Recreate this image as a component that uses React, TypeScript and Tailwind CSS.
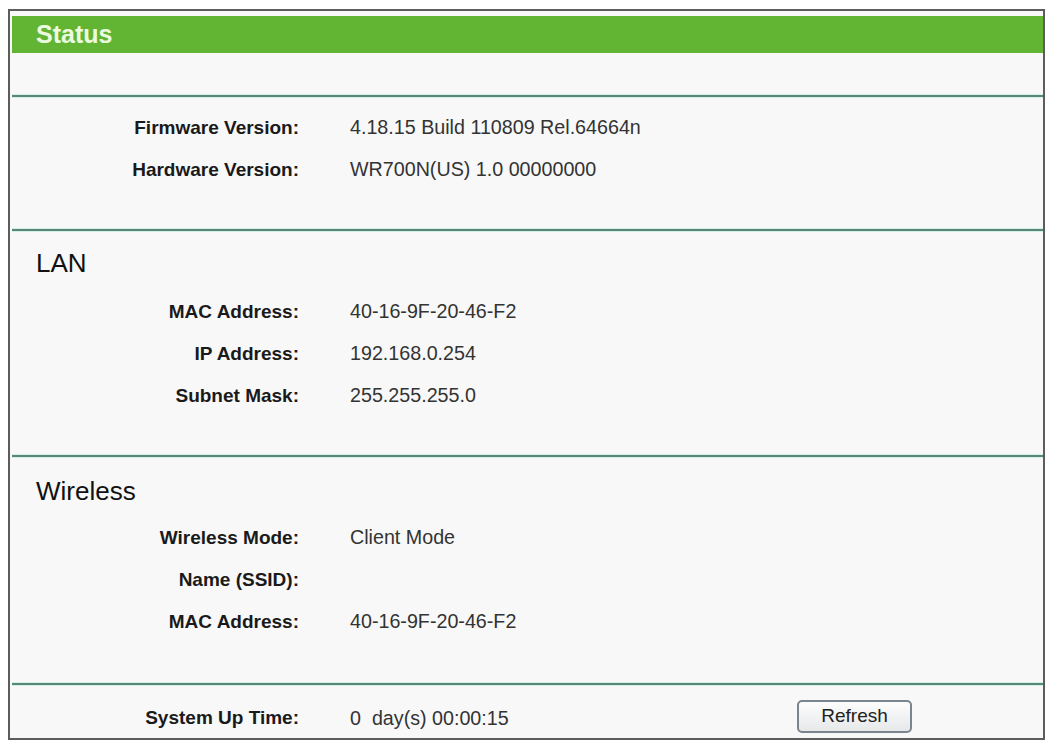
const rows1 = [
  { label: "Firmware Version:", value: "4.18.15 Build 110809 Rel.64664n" },
  { label: "Hardware Version:", value: "WR700N(US) 1.0 00000000" },
];

const lanRows = [
  { label: "MAC Address:", value: "40-16-9F-20-46-F2" },
  { label: "IP Address:", value: "192.168.0.254" },
  { label: "Subnet Mask:", value: "255.255.255.0" },
];

const wirelessRows = [
  { label: "Wireless Mode:", value: "Client Mode" },
  { label: "Name (SSID):", value: "" },
  { label: "MAC Address:", value: "40-16-9F-20-46-F2" },
];

const Divider = () => (
  <div className="h-[2px] bg-[#58877a] shadow-[0_1px_0_#d3f0e6,0_-1px_0_#d3f0e6]" />
);

const Row = (props: { label: string; value: string }) => {
  return (
    <div className="flex h-[42px] items-center">
      <div className="w-[287px] text-right text-[19px] font-bold text-[#1a1a1a]">{props.label}</div>
      <div className="pl-[51px] text-[19.7px] text-[#333]">{props.value}</div>
    </div>
  );
};

const App = () => {
  return (
    <div className="min-h-screen bg-white pl-[8px] pt-[9px] font-['Liberation_Sans',Arial,sans-serif]">
      <div className="flex h-[731px] w-[1037px] flex-col border-2 border-[#5c5c5c] bg-[#f8f8f8] pl-[2px] pt-[5px]">
        {/* header */}
        <div className="flex h-[37px] items-center bg-[#62b533] pl-[24px] text-[25px] font-bold text-[#ecfbe0]">
          Status
        </div>
        <div className="h-[42px]" />
        <Divider />

        {/* versions */}
        <div className="pt-[10px] pb-[38px]">
          {rows1.map((r) => (
            <Row key={r.label} label={r.label} value={r.value} />
          ))}
        </div>
        <Divider />

        {/* LAN */}
        <div className="pt-[14px] pb-[38px]">
          <div className="flex h-[36px] items-center pl-[24px] text-[26px] text-[#111]">LAN</div>
          <div className="mt-[10px]">
            {lanRows.map((r) => (
              <Row key={r.label} label={r.label} value={r.value} />
            ))}
          </div>
        </div>
        <Divider />

        {/* Wireless */}
        <div className="pt-[16px] pb-[40px]">
          <div className="flex h-[36px] items-center pl-[24px] text-[26px] text-[#111]">Wireless</div>
          <div className="mt-[8px]">
            {wirelessRows.map((r) => (
              <Row key={r.label} label={r.label} value={r.value} />
            ))}
          </div>
        </div>
        <Divider />

        {/* up time */}
        <div className="flex h-[33px] items-center mt-[15px]">
          <div className="w-[287px] pt-[4px] text-right text-[19px] font-bold text-[#1a1a1a]">System Up Time:</div>
          <div className="w-[498px] pl-[51px] pt-[4px] text-[19.7px] text-[#333]">0&nbsp; day(s) 00:00:15</div>
          <button className="h-[33px] w-[115px] rounded-[5px] border-2 border-[#7a8590] bg-gradient-to-b from-[#fdfdfd] to-[#e6e8ea] text-[19px] text-[#222]">
            Refresh
          </button>
        </div>
      </div>
    </div>
  );
};

export default App;
